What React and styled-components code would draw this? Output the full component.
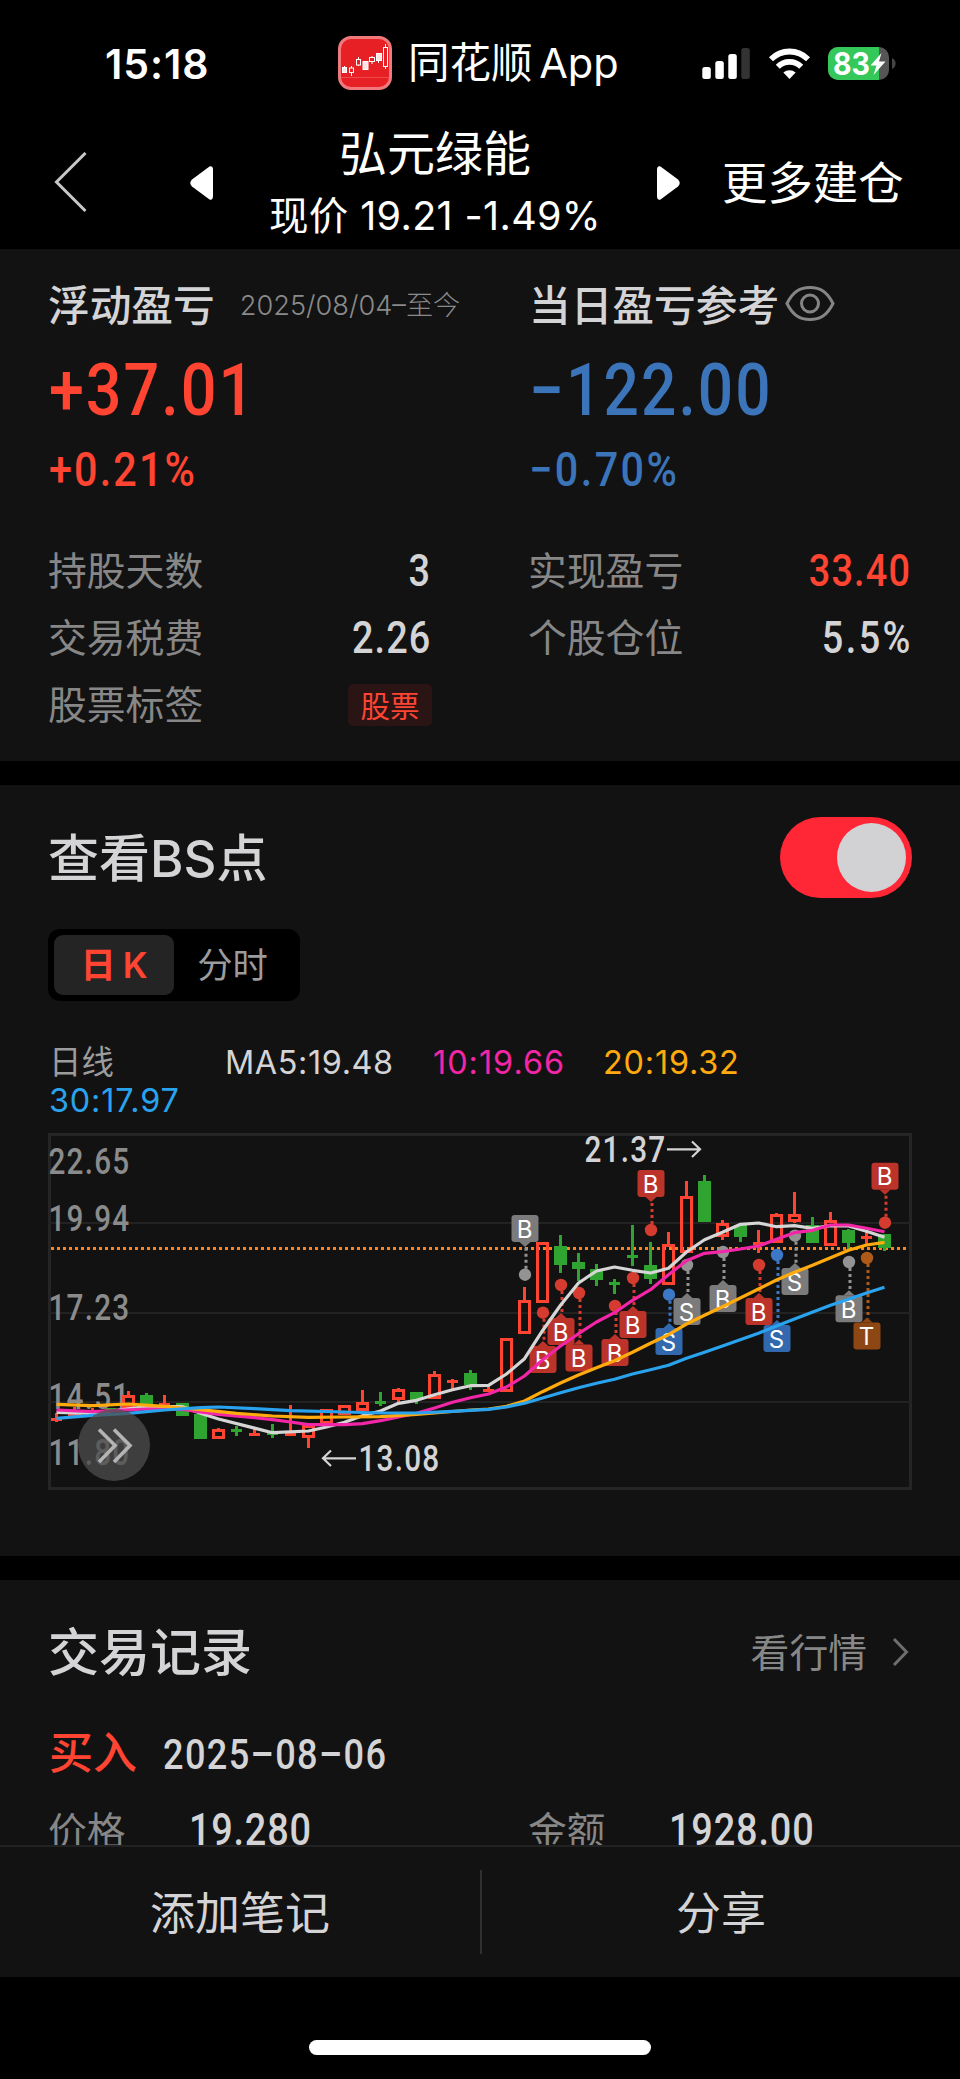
import React from 'react';
import styled, { createGlobalStyle } from 'styled-components';

const GlobalStyle = createGlobalStyle`
  * {
    box-sizing: border-box;
  }
  body {
    margin: 0;
    background-color: #000;
    font-family: "Inter", "Noto Sans CJK SC", sans-serif;
    color: #d4d4d6;
  }
`;

const Screen = styled.div`
  width: 960px;
  height: 2079px;
  display: flex;
  flex-direction: column;
  background-color: #000;
  overflow: hidden;
`;

/* status bar + nav */
const StatusBar = styled.header`
  height: 126px;
  display: grid;
  grid-template-columns: 338px 364px 1fr;
  align-items: center;
  color: #fff;
`;

const Clock = styled.div`
  padding-left: 105px;
  font-size: 41px;
  font-weight: 600;
  letter-spacing: 0.9px;
  line-height: 50px;
  padding-top: 2px;
`;

const AppName = styled.div`
  display: flex;
  align-items: center;
  gap: 16px;
  font-size: 41.5px;
  line-height: 54px;
  white-space: nowrap;
  word-spacing: -5px;
`;

const StatusIcons = styled.div`
  display: flex;
  align-items: center;
  gap: 18px;

  svg {
    overflow: visible;
  }
`;

const NavBar = styled.nav`
  height: 123px;
  flex: none;
  display: grid;
  grid-template-columns: 190px 490px 1fr;
  color: #fff;
`;

const BackButton = styled.div`
  padding: 26px 0 0 53px;
`;

const StockSwitch = styled.div`
  display: flex;
  justify-content: space-between;
`;

const Arrow = styled.svg`
  width: 23px;
  height: 34px;
  margin-top: 40px;
`;

const StockName = styled.div`
  text-align: center;
  font-size: 48px;
  line-height: 56px;
  white-space: nowrap;
`;

const StockPrice = styled.div`
  text-align: center;
  font-size: 39.5px;
  line-height: 50px;
  margin-top: 9px;
  letter-spacing: 0.35px;
  white-space: nowrap;
`;

const More = styled.div`
  padding: 30px 0 0 42px;
  font-size: 45.4px;
  line-height: 56px;
  white-space: nowrap;
`;

/* panels */
const Panel = styled.section`
  flex: none;
  height: ${(p) => p.$height}px;
  padding: 0 48px;
  background-color: #121212;
  margin-bottom: ${(p) => p.$gap || 0}px;
  overflow: hidden;
`;

const Columns = styled.div`
  display: grid;
  grid-template-columns: 384px 384px;
  column-gap: 96px;
`;

const ColumnTitle = styled.div`
  display: flex;
  align-items: center;
  height: 60px;
  margin: 24px 0 2px;
  padding-left: ${(p) => p.$inset || 0}px;
  font-size: 41.7px;
  font-weight: 500;
  white-space: nowrap;
`;

const DateRange = styled.span`
  margin-left: 25px;
  font-size: 27.2px;
  font-weight: 300;
  color: #8a8a8a;
`;

/* condensed numerals */
const Digits = styled.span`
  display: inline-block;
  font-family: "Roboto", "Noto Sans CJK SC", sans-serif;
  font-weight: 500;
  font-size: ${(p) => p.$size || 44}px;
  letter-spacing: ${(p) => p.$spacing || 0}px;
  margin-right: ${(p) => -(p.$spacing || 0)}px;
  transform: scaleX(${(p) => p.$stretch || 0.86});
  transform-origin: ${(p) => (p.$right ? 'right' : 'left')} center;
  color: ${(p) => p.$color || '#d4d4d6'};
`;

const Amount = styled.div`
  height: ${(p) => p.$height}px;
  line-height: ${(p) => p.$height}px;
  padding-left: 1px;
`;

const Details = styled.div`
  margin-top: 43px;
`;

const DetailRow = styled.div`
  display: flex;
  align-items: center;
  justify-content: space-between;
  height: 67px;
  padding-right: 2px;
`;

const Label = styled.span`
  font-size: 38.8px;
  line-height: 48px;
  padding-top: 1px;
  color: #878787;
`;

const StockTag = styled.span`
  width: 84px;
  height: 42px;
  margin-right: -2px;
  border-radius: 5px;
  background-color: #2a1514;
  color: #ff4432;
  font-size: 29.5px;
  line-height: 44px;
  text-align: center;
`;

const PanelHead = styled.div`
  display: flex;
  align-items: center;
  justify-content: space-between;
  height: 144px;
`;

const PanelTitle = styled.h2`
  margin: ${(p) => p.$drop || 0}px 0 0;
  font-size: 51px;
  font-weight: 500;
  line-height: 60px;
`;

const Toggle = styled.div`
  width: 132px;
  height: 81px;
  padding: 6px;
  border-radius: 41px;
  background-color: #ff2636;
  display: flex;
  justify-content: flex-end;
`;

const Knob = styled.div`
  width: 69px;
  height: 69px;
  border-radius: 50%;
  background-color: #d2d2d4;
`;

const Segmented = styled.div`
  display: flex;
  width: 252px;
  height: 72px;
  padding: 6px;
  border-radius: 12px;
  background-color: #000;
`;

const Segment = styled.div`
  width: ${(p) => (p.$active ? 120 : 117)}px;
  border-radius: 9px;
  font-size: 35.3px;
  line-height: 61px;
  text-align: center;
  word-spacing: -2px;
  font-weight: ${(p) => (p.$active ? 600 : 400)};
  color: ${(p) => (p.$active ? '#ff4432' : '#9c9c9c')};
  background-color: ${(p) => (p.$active ? '#242424' : 'transparent')};
`;

const Legend = styled.div`
  display: flex;
  flex-wrap: wrap;
  margin: 43px 0 13px 1px;
  line-height: 38px;
  font-size: 32.4px;
`;

const LegendItem = styled.span`
  width: ${(p) => p.$width}px;
  color: ${(p) => p.$color};
  letter-spacing: ${(p) => p.$spacing || 0}px;
`;

const ChartBox = styled.div`
  position: relative;
  width: 864px;
  height: 357px;

  svg {
    display: block;
    overflow: visible;
  }
`;

const ExpandButton = styled.div`
  position: absolute;
  left: 30px;
  top: 276px;
  width: 72px;
  height: 72px;
  border-radius: 50%;
  background-color: rgba(78, 78, 78, 0.75);
`;

const MoreLink = styled.div`
  display: flex;
  align-items: center;
  gap: 25px;
  padding-right: 3px;
`;

const RecordHead = styled.div`
  display: flex;
  align-items: center;
  height: 60px;
  margin-bottom: 4px;
  gap: 26px;
  padding-left: 1px;
`;

const Side = styled.span`
  font-size: 44px;
  font-weight: 500;
  line-height: 58px;
  margin-top: -3px;
  color: #ff4432;
`;

const RecordField = styled.div`
  display: flex;
  align-items: center;
  height: 84px;
  gap: ${(p) => p.$gap}px;
`;

const BottomBar = styled.footer`
  display: grid;
  grid-template-columns: 480px 2px 478px;
  align-items: center;
  flex: none;
  height: 132px;
  border-top: 2px solid #222;
  background-color: #121212;
  text-align: center;
  font-size: 45px;
  line-height: 60px;
`;

const Action = styled.div`
  padding-top: 4px;
`;

const Divider = styled.div`
  height: 84px;
  background-color: #303030;
`;

const HomeIndicator = styled.div`
  width: 342px;
  height: 15px;
  margin: 63px auto 0;
  border-radius: 8px;
  background-color: #fff;
`;

const RED = '#ff4432';
const GREEN = '#2fa430';

// [direction, high, top, bottom, low]
const candles = [
  ['r', 1413, 1418, 1421, 1422],
  ['r', 1407, 1412, 1418, 1418],
  ['r', 1408, 1412, 1417, 1417],
  ['g', 1408, 1408, 1412, 1412],
  ['r', 1391, 1395, 1408, 1408],
  ['g', 1393, 1395, 1406, 1406],
  ['r', 1395, 1403, 1406, 1406],
  ['g', 1403, 1403, 1416, 1416],
  ['g', 1414, 1414, 1439, 1439],
  ['r', 1428, 1429, 1439, 1439],
  ['g', 1426, 1429, 1432, 1436],
  ['r', 1427, 1433, 1436, 1436],
  ['g', 1424, 1433, 1435, 1438],
  ['r', 1405, 1433, 1436, 1436],
  ['r', 1424, 1425, 1438, 1448],
  ['r', 1409, 1409, 1424, 1424],
  ['r', 1405, 1405, 1415, 1415],
  ['r', 1390, 1402, 1411, 1411],
  ['g', 1392, 1401, 1404, 1406],
  ['r', 1388, 1389, 1400, 1402],
  ['g', 1392, 1392, 1400, 1404],
  ['r', 1371, 1374, 1399, 1399],
  ['r', 1379, 1380, 1383, 1389],
  ['g', 1370, 1373, 1385, 1390],
  ['r', 1385, 1389, 1392, 1392],
  ['r', 1338, 1338, 1392, 1392],
  ['r', 1287, 1300, 1334, 1334],
  ['r', 1242, 1242, 1303, 1303],
  ['g', 1235, 1246, 1265, 1273],
  ['g', 1253, 1262, 1269, 1281],
  ['g', 1264, 1269, 1280, 1286],
  ['g', 1279, 1282, 1285, 1294],
  ['g', 1225, 1255, 1258, 1266],
  ['g', 1242, 1265, 1279, 1284],
  ['r', 1232, 1244, 1285, 1285],
  ['r', 1181, 1196, 1253, 1253],
  ['g', 1175, 1181, 1222, 1222],
  ['r', 1220, 1223, 1237, 1240],
  ['g', 1225, 1225, 1237, 1242],
  ['r', 1230, 1242, 1245, 1253],
  ['r', 1213, 1214, 1243, 1243],
  ['r', 1192, 1214, 1222, 1223],
  ['g', 1217, 1225, 1243, 1243],
  ['r', 1212, 1220, 1246, 1246],
  ['g', 1229, 1230, 1243, 1249],
  ['r', 1232, 1236, 1239, 1244],
  ['g', 1234, 1234, 1248, 1251],
];

const xOf = (i) => 56.5 + 18 * i;

// moving averages as [candle index, y]
const averages = [
  {
    color: '#d6d6d6',
    points: [[0, 1412.3], [2, 1413.3], [3, 1411], [5, 1406.7], [7, 1406.7], [8, 1413.3], [9, 1419], [12, 1432.7], [14, 1431], [15, 1427], [16, 1422.3], [17, 1415.7], [18, 1411], [19, 1403.3], [20, 1400.3], [21, 1394.7], [22, 1389.7], [23, 1385.7], [24, 1385.3], [25, 1374], [26, 1358.7], [27, 1330.7], [28, 1305.3], [29, 1283], [30, 1271], [31, 1267], [32, 1270.3], [33, 1273], [34, 1268.3], [35, 1252], [36, 1239.7], [37, 1232.3], [38, 1224.3], [39, 1223], [40, 1226.7], [41, 1225.7], [42, 1228.3], [43, 1225.7], [44, 1226], [45, 1231.3], [46, 1237.3]],
  },
  {
    color: '#f226a6',
    points: [[0, 1410], [2, 1411.7], [5, 1409], [7, 1409.3], [9, 1414.3], [11, 1417.7], [12, 1419.7], [13, 1422], [14, 1424.7], [16, 1424.7], [17, 1423.7], [18, 1420.7], [19, 1417], [20, 1413.3], [21, 1408], [22, 1402.3], [23, 1397.7], [24, 1394], [25, 1387], [26, 1376], [27, 1360], [28, 1346], [29, 1333.7], [30, 1322], [31, 1312.7], [32, 1300.3], [33, 1289.7], [34, 1274.7], [35, 1260.7], [36, 1253.3], [37, 1251.7], [38, 1249], [39, 1246], [40, 1239.3], [41, 1232.7], [42, 1230.3], [43, 1225], [44, 1225], [45, 1228.3], [46, 1231.7]],
  },
  {
    color: '#ffaa0d',
    points: [[0, 1404.3], [2, 1405.7], [4, 1404], [6, 1406.3], [8, 1409.7], [10, 1413.3], [12, 1416], [14, 1417.3], [16, 1417], [18, 1416.7], [20, 1414.3], [21, 1413], [23, 1410], [24, 1409], [25, 1406.3], [26, 1401], [27, 1391.7], [28, 1383], [29, 1375], [30, 1367.7], [31, 1360.7], [32, 1352.3], [33, 1343.3], [34, 1334.7], [35, 1324], [36, 1315.3], [37, 1306.7], [39, 1289], [40, 1280], [41, 1272.3], [42, 1265.3], [43, 1257.7], [44, 1250.3], [45, 1245], [46, 1242.3]],
  },
  {
    color: '#2aa3ef',
    points: [[0, 1418.3], [2, 1415.3], [4, 1413.3], [6, 1410], [8, 1407.7], [9, 1407], [11, 1408.7], [13, 1410.7], [16, 1412], [18, 1413], [20, 1413], [22, 1411.3], [24, 1409.3], [25, 1407], [26, 1403.3], [27, 1398], [28, 1392.7], [29, 1387.7], [30, 1383.3], [31, 1379.3], [32, 1374], [33, 1369.7], [34, 1365.3], [35, 1358.3], [36, 1352.3], [37, 1346], [39, 1333.3], [40, 1326], [41, 1319], [43, 1305.3], [44, 1299.3], [45, 1293], [46, 1287.3]],
  },
];

const tones = {
  red: { tag: '#bc3329', dot: '#d53b2e' },
  gray: { tag: '#7b7b7b', dot: '#939393' },
  blue: { tag: '#3269ae', dot: '#3d78c8' },
  brown: { tag: '#8c4714', dot: '#ae5a18' },
};

// trades as [candle index, dot y, tag centre y, tone, letter]
const trades = [
  [26, 1274.7, 1228.5, 'gray', 'B'],
  [27, 1312.7, 1359.5, 'red', 'B'],
  [28, 1285, 1331.5, 'red', 'B'],
  [29, 1293, 1358, 'red', 'B'],
  [31, 1306, 1352.5, 'red', 'B'],
  [32, 1278, 1324.5, 'red', 'B'],
  [33, 1230, 1183.5, 'red', 'B'],
  [34, 1294.7, 1341.5, 'blue', 'S'],
  [35, 1265, 1311.5, 'gray', 'S'],
  [37, 1252, 1298.5, 'gray', 'B'],
  [39, 1265, 1311.5, 'red', 'B'],
  [40, 1255, 1338.5, 'blue', 'S'],
  [41, 1235.7, 1281.5, 'gray', 'S'],
  [44, 1262, 1308.7, 'gray', 'B'],
  [45, 1258, 1336, 'brown', 'T'],
  [46, 1222.7, 1176.3, 'red', 'B'],
];

const scale = [
  ['22.65', 1174],
  ['19.94', 1231],
  ['17.23', 1320],
  ['14.51', 1409],
  ['11.80', 1465],
];

const Candle = ({ x, data }) => {
  const [dir, high, top, bottom, low] = data;
  const color = dir === 'r' ? RED : GREEN;
  const hollow = dir === 'r' && bottom - top > 5;
  return (
    <g>
      <rect x={x - 1.5} y={high} width="3" height={top - high} fill={color} />
      <rect x={x - 1.5} y={bottom} width="3" height={low - bottom} fill={color} />
      {hollow ? (
        <rect x={x - 5} y={top + 1.5} width="10" height={bottom - top - 3} fill="none" stroke={color} strokeWidth="3" />
      ) : (
        <rect
          x={x - (bottom - top > 5 ? 6.5 : 5.5)}
          y={top}
          width={bottom - top > 5 ? 13 : 11}
          height={bottom - top}
          fill={color}
        />
      )}
    </g>
  );
};

const Trade = ({ x, dot, tag, tone, letter }) => {
  const side = tag > dot ? -1 : 1;
  const edge = tag + side * 13.5;
  return (
    <g>
      <line x1={x + 1.5} x2={x + 1.5} y1={dot} y2={edge + side * 4} stroke={tones[tone].dot} strokeWidth="3" strokeDasharray="3 3" />
      <circle cx={x + 0.5} cy={dot} r="6.2" fill={tones[tone].dot} />
      <path d={`M${x - 5} ${edge} L${x + 0.5} ${edge + side * 5} L${x + 6} ${edge} Z`} fill={tones[tone].tag} />
      <rect x={x - 13} y={tag - 13.5} width="27" height="27" rx="3" fill={tones[tone].tag} />
      <text x={x} y={tag + 9} textAnchor="middle" fontFamily="Inter, sans-serif" fontSize="24" fill="#fff">
        {letter}
      </text>
    </g>
  );
};

const KLineChart = () => (
  <svg width="864" height="357" viewBox="48 1133 864 357">
    <rect x="49.5" y="1134.5" width="861" height="354" fill="none" stroke="#252525" strokeWidth="3" />
    {[1223, 1313, 1402].map((y) => (
      <line key={y} x1="48" x2="912" y1={y} y2={y} stroke="#222" strokeWidth="2" />
    ))}
    <line x1="51" x2="907" y1="1248.5" y2="1248.5" stroke="#ff8420" strokeWidth="3" strokeDasharray="3 3" />
    <g fontFamily="Roboto, sans-serif" fontSize="36" fontWeight="500" letterSpacing="1.5" fill="#8b8b8b">
      {scale.map(([label, y]) => (
        <text key={label} x="48.5" y={y} textLength="82" lengthAdjust="spacingAndGlyphs">
          {label}
        </text>
      ))}
    </g>
    {candles.map((data, i) => (
      <Candle key={i} x={xOf(i)} data={data} />
    ))}
    {trades.map(([i, dot, tag, tone, letter]) => (
      <Trade key={i} x={xOf(i)} dot={dot} tag={tag} tone={tone} letter={letter} />
    ))}
    {averages.map(({ color, points }) => (
      <polyline
        key={color}
        points={points.map(([i, y]) => `${xOf(i)},${y}`).join(' ')}
        fill="none"
        stroke={color}
        strokeWidth="3.2"
        strokeLinejoin="round"
      />
    ))}
    <g fontFamily="Roboto, sans-serif" fontSize="36" fontWeight="500" letterSpacing="1.5" fill="#d4d4d6">
      <text x="584.5" y="1162" textLength="82" lengthAdjust="spacingAndGlyphs">
        21.37
      </text>
      <text x="358.5" y="1471" textLength="82" lengthAdjust="spacingAndGlyphs">
        13.08
      </text>
    </g>
    <g fill="none" stroke="#d4d4d6" strokeWidth="2.2">
      <path d="M667 1149.3 H700 M692 1141.5 L700 1149.3 L692 1157" />
      <path d="M356 1458.3 H323 M331 1450.5 L323 1458.3 L331 1466" />
    </g>
  </svg>
);

const AppIcon = () => (
  <svg width="54" height="54" viewBox="0 0 54 54">
    <rect x="1.5" y="1.5" width="51" height="51" rx="11.5" fill="#e62025" stroke="#f07a7b" strokeWidth="3" />
    <path d="M3 41.5 H51" stroke="#ee4a4a" strokeWidth="1" />
    <g stroke="#fff" strokeWidth="1">
      <path d="M6.5 30 V32 M13.5 30 V40 M20.5 21 V30 M34 20 V28 M40.5 17 V27 M47.5 8 V33" />
      <rect x="4.5" y="31.5" width="4" height="5" fill="#ffe3e3" />
      <rect x="11.5" y="32" width="4" height="4.5" fill="#e62025" />
      <rect x="18.5" y="23.5" width="4" height="5.5" fill="#e62025" />
      <rect x="25" y="25.5" width="5" height="8" fill="#ffe3e3" />
      <rect x="31.5" y="21.5" width="5" height="4" fill="#e62025" />
      <rect x="38.5" y="17.5" width="5" height="7" fill="#ffe3e3" />
      <rect x="45.5" y="11.5" width="4" height="19" fill="#e62025" />
    </g>
  </svg>
);

const Signal = () => (
  <svg width="49" height="31" viewBox="0 0 49 31" fill="#fff">
    <rect x="0.3" y="19" width="8.5" height="12" rx="2.5" />
    <rect x="13.3" y="13" width="8.5" height="18" rx="2.5" />
    <rect x="26.3" y="6" width="8.5" height="25" rx="2.5" />
    <rect x="39.3" y="0" width="8.5" height="31" rx="2.5" fill="#333" />
  </svg>
);

const Wifi = () => (
  <svg width="41" height="31" viewBox="0 0 42 31" preserveAspectRatio="none">
    <g fill="none" stroke="#fff" strokeWidth="5.8">
      <path d="M2 11.3 A27 27 0 0 1 40 11.3" />
      <path d="M9 18.8 A17 17 0 0 1 33 18.8" />
    </g>
    <path d="M21 31 L14.7 24.6 A9.5 9.5 0 0 1 27.3 24.6 Z" fill="#fff" />
  </svg>
);

const Battery = () => (
  <svg width="68" height="33" viewBox="0 0 68 33">
    <rect width="61" height="33" rx="10" fill="#555" />
    <path d="M10 0 H51 V33 H10 A10 10 0 0 1 0 23 V10 A10 10 0 0 1 10 0 Z" fill="#34c759" />
    <path d="M64 11 A6 6 0 0 1 64 22 Z" fill="#444" />
    <text
      x="5"
      y="27.5"
      textLength="37"
      lengthAdjust="spacingAndGlyphs"
      fontFamily="Inter, sans-serif"
      fontSize="31"
      fontWeight="700"
      fill="#fff"
    >
      83
    </text>
    <path d="M53.5 6 L42.5 18.5 H48.5 L45.5 28 L57.5 14.5 H51 Z" fill="#fff" />
  </svg>
);

const App = () => {
  return (
    <>
      <GlobalStyle />
      <Screen>
        <StatusBar>
          <Clock>15:18</Clock>
          <AppName>
            <AppIcon />
            同花顺 App
          </AppName>
          <StatusIcons>
            <Signal />
            <Wifi />
            <Battery />
          </StatusIcons>
        </StatusBar>
        <NavBar>
          <BackButton>
            <svg width="34" height="60" viewBox="0 0 34 60" fill="none" stroke="#c8c8c8" strokeWidth="3">
              <path d="M32.5 1 L3.5 30 L32.5 59" />
            </svg>
          </BackButton>
          <StockSwitch>
            <Arrow viewBox="0 0 23 34" fill="#fff">
              <path d="M19.5 0.5 Q23 -0.5 23 4 V30 Q23 34.5 19.5 33.5 L2 20.5 Q-1.5 17 2 13.5 Z" />
            </Arrow>
            <div>
              <StockName>弘元绿能</StockName>
              <StockPrice>现价 19.21 -1.49%</StockPrice>
            </div>
            <Arrow viewBox="0 0 23 34" fill="#fff">
              <path d="M3.5 0.5 Q0 -0.5 0 4 V30 Q0 34.5 3.5 33.5 L21 20.5 Q24.5 17 21 13.5 Z" />
            </Arrow>
          </StockSwitch>
          <More>更多建仓</More>
        </NavBar>

        <Panel $height={512} $gap={24}>
          <Columns>
            <div>
              <ColumnTitle>
                浮动盈亏
                <DateRange>2025/08/04–至今</DateRange>
              </ColumnTitle>
              <Amount $height={111}>
                <Digits $size={71.5} $spacing={2.2} $stretch={0.88} $color={RED}>+37.01</Digits>
              </Amount>
              <Amount $height={48}>
                <Digits $size={48} $spacing={2.5} $color={RED}>+0.21%</Digits>
              </Amount>
              <Details>
                <DetailRow>
                  <Label>持股天数</Label>
                  <Digits $right>3</Digits>
                </DetailRow>
                <DetailRow>
                  <Label>交易税费</Label>
                  <Digits $right $spacing={1.3}>2.26</Digits>
                </DetailRow>
                <DetailRow>
                  <Label>股票标签</Label>
                  <StockTag>股票</StockTag>
                </DetailRow>
              </Details>
            </div>
            <div>
              <ColumnTitle $inset={1}>
                当日盈亏参考
                <svg width="56" height="38" viewBox="-5 -0.5 56 38" fill="none" stroke="#858585" strokeWidth="3">
                  <path d="M3 19 C9 7 16 3 26 3 S43 7 49 19 C43 31 36 35 26 35 S9 31 3 19 Z" />
                  <circle cx="26" cy="19" r="8.5" />
                </svg>
              </ColumnTitle>
              <Amount $height={111}>
                <Digits $size={71.5} $spacing={2.4} $stretch={0.87} $color="#3b74b9">−122.00</Digits>
              </Amount>
              <Amount $height={48}>
                <Digits $size={48} $spacing={2.9} $color="#3b74b9">−0.70%</Digits>
              </Amount>
              <Details>
                <DetailRow>
                  <Label>实现盈亏</Label>
                  <Digits $right $spacing={1.4} $color={RED}>33.40</Digits>
                </DetailRow>
                <DetailRow>
                  <Label>个股仓位</Label>
                  <Digits $right $spacing={2.8}>5.5%</Digits>
                </DetailRow>
              </Details>
            </div>
          </Columns>
        </Panel>

        <Panel $height={771} $gap={24}>
          <PanelHead>
            <PanelTitle $drop={4}>查看BS点</PanelTitle>
            <Toggle>
              <Knob />
            </Toggle>
          </PanelHead>
          <Segmented>
            <Segment $active>日 K</Segment>
            <Segment>分时</Segment>
          </Segmented>
          <Legend>
            <LegendItem $width={176} $color="#9c9c9c">日线</LegendItem>
            <LegendItem $width={208} $color="#d4d4d6" $spacing={0.6}>MA5:19.48</LegendItem>
            <LegendItem $width={170} $color="#f226a6" $spacing={1}>10:19.66</LegendItem>
            <LegendItem $width={300} $color="#ffaa0d" $spacing={0.8}>20:19.32</LegendItem>
            <LegendItem $width={200} $color="#2aa3ef" $spacing={0.8}>30:17.97</LegendItem>
          </Legend>
          <ChartBox>
            <KLineChart />
            <ExpandButton>
              <svg width="72" height="72" viewBox="0 0 72 72" fill="none" stroke="#b4b4b4" strokeWidth="3.6">
                <path d="M21 20.5 L37 36.5 L21 53 M36 20.5 L52 36.5 L36 53" />
              </svg>
            </ExpandButton>
          </ChartBox>
        </Panel>

        <Panel $height={265}>
          <PanelHead>
            <PanelTitle $drop={2}>交易记录</PanelTitle>
            <MoreLink>
              <Label>看行情</Label>
              <svg width="17" height="30" viewBox="0 0 17 30" fill="none" stroke="#6e6e6e" strokeWidth="3">
                <path d="M2 2 L14.5 15 L2 28" />
              </svg>
            </MoreLink>
          </PanelHead>
          <RecordHead>
            <Side>买入</Side>
            <Digits $size={42} $spacing={1.6}>2025–08–06</Digits>
          </RecordHead>
          <Columns>
            <RecordField $gap={63}>
              <Label>价格</Label>
              <Digits $spacing={0.9}>19.280</Digits>
            </RecordField>
            <RecordField $gap={63}>
              <Label>金额</Label>
              <Digits $spacing={1}>1928.00</Digits>
            </RecordField>
          </Columns>
        </Panel>

        <BottomBar>
          <Action>添加笔记</Action>
          <Divider />
          <Action>分享</Action>
        </BottomBar>
        <HomeIndicator />
      </Screen>
    </>
  );
};

export default App;
